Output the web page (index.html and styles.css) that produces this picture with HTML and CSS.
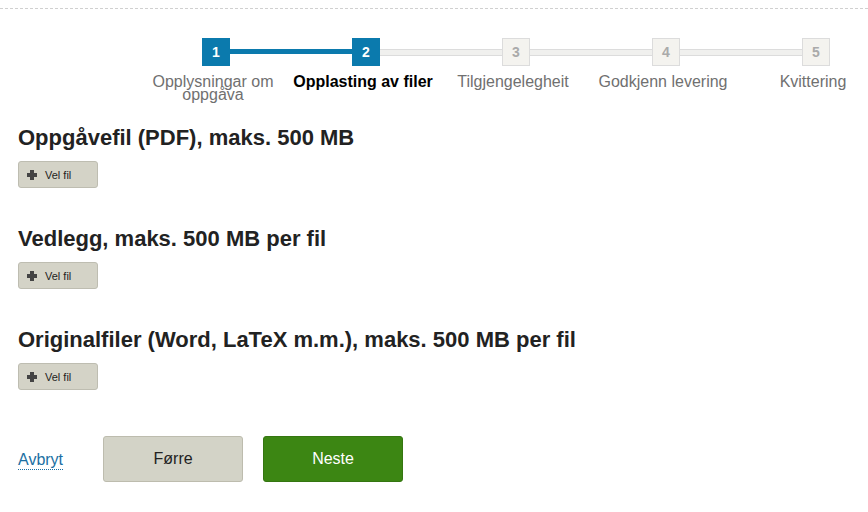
FILE: index.html
```html
<!DOCTYPE html>
<html lang="nn">
<head>
    <meta charset="UTF-8">
    <title>Opplasting av filer</title>
    <link rel="stylesheet" href="styles.css">
</head>
<body>
<div class="topbar"></div>
<div class="page">
    <ol class="steps">
        <li class="step done"><span class="num">1</span><span class="label">Opplysningar om oppgåva</span></li>
        <li class="step done current"><span class="num">2</span><span class="label">Opplasting av filer</span></li>
        <li class="step"><span class="num">3</span><span class="label">Tilgjengelegheit</span></li>
        <li class="step"><span class="num">4</span><span class="label">Godkjenn levering</span></li>
        <li class="step"><span class="num">5</span><span class="label">Kvittering</span></li>
    </ol>

    <div class="section">
        <h2>Oppgåvefil (PDF), maks. 500 MB</h2>
        <button class="file-btn"><span class="plus"></span>Vel fil</button>
    </div>
    <div class="section">
        <h2>Vedlegg, maks. 500 MB per fil</h2>
        <button class="file-btn"><span class="plus"></span>Vel fil</button>
    </div>
    <div class="section">
        <h2>Originalfiler (Word, LaTeX m.m.), maks. 500 MB per fil</h2>
        <button class="file-btn"><span class="plus"></span>Vel fil</button>
    </div>

    <div class="actions">
        <a href="#" class="cancel">Avbryt</a>
        <button class="btn prev">Førre</button>
        <button class="btn next">Neste</button>
    </div>
</div>
</body>
</html>
```

FILE: styles.css
```css
*{
    margin: 0;
    padding: 0;
    box-sizing: border-box;
}
html, body{
    overflow: hidden;
}
body{
    font-family: "Liberation Sans", Arial, sans-serif;
    color: #222;
    background: #fff;
}
.topbar{
    height: 9px;
    border-bottom: 1px dashed #d0d0d0;
}
.page{
    padding: 0 18px;
}

/* steg */
.steps{
    list-style: none;
    display: grid;
    grid-template-columns: repeat(5, 150px);
    margin: 29px 0 0 123px;
    width: 750px;
}
.step{
    position: relative;
    display: flex;
    flex-direction: column;
    align-items: center;
    text-align: center;
}
.step + .step::before{
    content: "";
    position: absolute;
    left: -75px;
    width: 150px;
    top: 11px;
    height: 5px;
    background: #f0f0ee;
    border-top: 1px solid #dcdcdc;
    border-bottom: 1px solid #dcdcdc;
}
.step.done + .step.done::before{
    background: #0b7aad;
    border: 0;
}
.num{
    position: relative;
    z-index: 1;
    width: 28px;
    height: 28px;
    line-height: 26px;
    font-size: 14px;
    font-weight: bold;
    color: #aaa;
    background: #f4f3ef;
    border: 1px solid #dcdcdc;
}
.done .num{
    background: #0b7aad;
    border-color: #0b7aad;
    color: #fff;
}
.label{
    margin: 9px 6px 0 0;
    font-size: 16px;
    line-height: 13px;
    color: #707070;
}
.current .label{
    color: #000;
    font-weight: bold;
    white-space: nowrap;
}

/* seksjonar */
.section{
    margin-top: 24px;
}
.section + .section{
    margin-top: 38px;
}
.section h2{
    font-size: 22px;
    line-height: 26px;
    font-weight: bold;
    color: #222;
}
.file-btn{
    margin-top: 10px;
    width: 80px;
    height: 27px;
    display: flex;
    align-items: center;
    padding-left: 8px;
    font-family: inherit;
    font-size: 11px;
    color: #222;
    background: #d4d3c7;
    border: 1px solid #bebdb1;
    border-radius: 3px;
}
.plus{
    position: relative;
    width: 10px;
    height: 10px;
    margin-right: 8px;
}
.plus::before, .plus::after{
    content: "";
    position: absolute;
    background: #444;
}
.plus::before{
    left: 0;
    right: 0;
    top: 3px;
    height: 4px;
}
.plus::after{
    top: 0;
    bottom: 0;
    left: 3px;
    width: 4px;
}

/* knappar */
.actions{
    display: flex;
    align-items: center;
    margin-top: 46px;
}
.cancel{
    color: #1b6fa3;
    font-size: 16px;
    text-decoration: none;
    border-bottom: 1px dotted #1b6fa3;
    margin-right: 40px;
    margin-top: 3px;
}
.btn{
    width: 140px;
    height: 46px;
    font-family: inherit;
    font-size: 16px;
    border-radius: 3px;
    cursor: pointer;
}
.prev{
    background: #d3d3c7;
    border: 1px solid #bdbcae;
    color: #222;
    margin-right: 20px;
}
.next{
    background: #3c8613;
    border: 1px solid #357611;
    color: #fff;
}
```
